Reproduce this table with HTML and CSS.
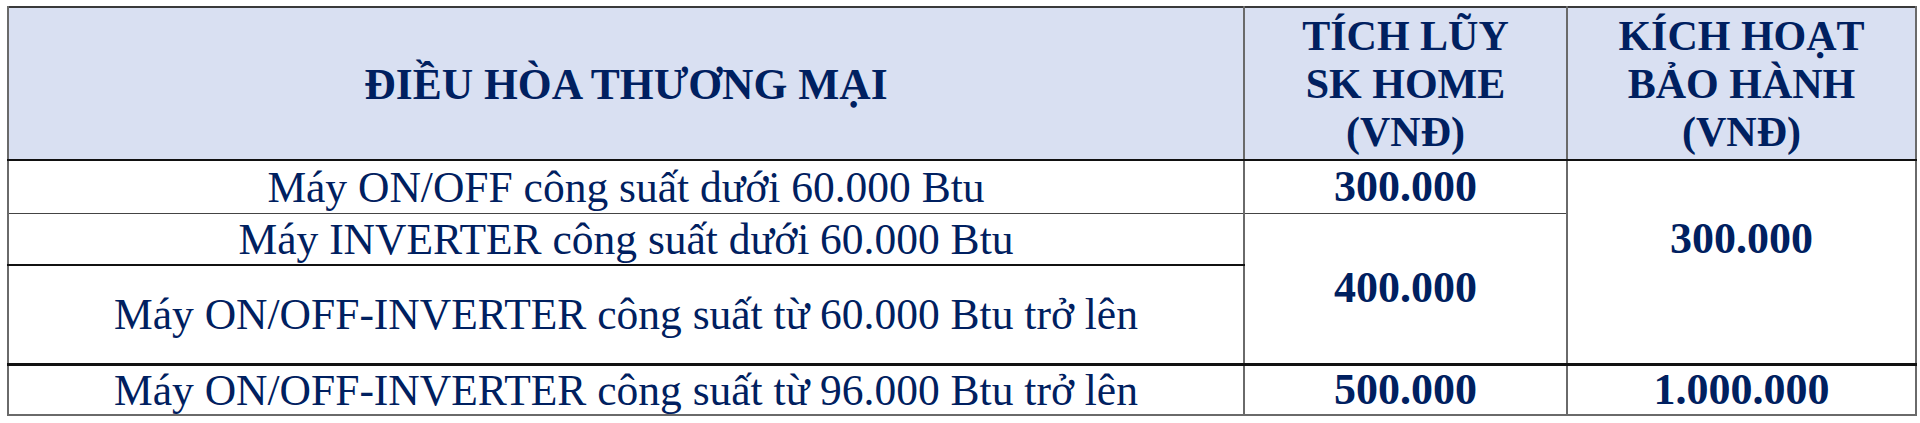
FILE: index.html
```html
<!DOCTYPE html>
<html lang="vi">
<head>
<meta charset="utf-8">
<title>Điều hòa thương mại</title>
<link rel="stylesheet" href="styles.css">
</head>
<body>
<div class="page">
<table class="grid">
  <colgroup>
    <col class="c-name">
    <col class="c-sk">
    <col class="c-bh">
  </colgroup>
  <thead>
    <tr class="r-head">
      <th class="h-name">ĐIỀU HÒA THƯƠNG MẠI</th>
      <th class="h-col">TÍCH LŨY<br>SK HOME<br>(VNĐ)</th>
      <th class="h-col">KÍCH HOẠT<br>BẢO HÀNH<br>(VNĐ)</th>
    </tr>
  </thead>
  <tbody>
    <tr class="r1">
      <td class="name b-thin">Máy ON/OFF công suất dưới 60.000 Btu</td>
      <td class="num b-thin">300.000</td>
      <td class="num num-top b-thick" rowspan="3">300.000</td>
    </tr>
    <tr class="r2">
      <td class="name b-dark">Máy INVERTER công suất dưới 60.000 Btu</td>
      <td class="num b-thick" rowspan="2">400.000</td>
    </tr>
    <tr class="r3">
      <td class="name b-thick">Máy ON/OFF-INVERTER công suất từ 60.000 Btu trở lên</td>
    </tr>
    <tr class="r4">
      <td class="name">Máy ON/OFF-INVERTER công suất từ 96.000 Btu trở lên</td>
      <td class="num">500.000</td>
      <td class="num">1.000.000</td>
    </tr>
  </tbody>
</table>
</div>
</body>
</html>
```

FILE: styles.css
```css
html, body {
  margin: 0;
  padding: 0;
  background: #ffffff;
}

.page {
  padding: 6px 0 0 7px;
}

.grid {
  border-collapse: collapse;
  table-layout: fixed;
  width: 1908px;
  font-family: "Liberation Serif", "Times New Roman", serif;
  color: #002060;
  border-top: 2px solid #3a3a3a;
  border-left: 2px solid #6a6a6a;
  border-right: 2px solid #6a6a6a;
  border-bottom: 2px solid #6a6a6a;
}

.c-name { width: 1236px; }
.c-sk { width: 323px; }
.c-bh { width: 349px; }

th, td {
  padding: 0;
  text-align: center;
  vertical-align: middle;
  border-left: 2px solid #6a6a6a;
  border-right: 2px solid #6a6a6a;
}

thead th {
  background: #d9e0f2;
  font-weight: bold;
  font-size: 42px;
  line-height: 48px;
  border-bottom: 2px solid #111111;
}

thead .h-name {
  font-size: 43.5px;
}

.r-head { height: 153px; }
.r1 { height: 53px; }
.r2 { height: 52px; }
.r3 { height: 99px; }
.r4 { height: 50px; }

.name {
  font-size: 43.5px;
  line-height: 48px;
  white-space: nowrap;
}

.num {
  font-size: 44px;
  line-height: 48px;
  font-weight: bold;
}

.num-top {
  padding-bottom: 46px;
}

.b-thin { border-bottom: 1px solid #444444; }
.b-dark { border-bottom: 2px solid #111111; }
.b-thick { border-bottom: 3px solid #111111; }
```
